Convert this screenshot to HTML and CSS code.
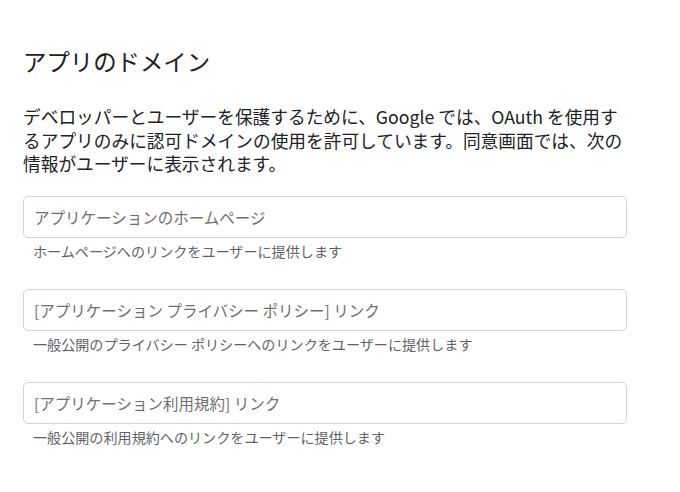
FILE: index.html
```html
<!DOCTYPE html>
<html lang="ja">

<head>
    <meta charset="UTF-8">
    <title>アプリのドメイン</title>
    <link rel="stylesheet" href="styles.css">
</head>

<body>
    <section class="domain">
        <h2 class="domain-title">アプリのドメイン</h2>

        <p class="domain-desc">デベロッパーとユーザーを保護するために、Google では、OAuth を使用す<br>るアプリのみに認可ドメインの使用を許可しています。同意画面では、次の<br>情報がユーザーに表示されます。</p>

        <!-- Links shown on the consent screen -->
        <div class="field">
            <input class="field-input" type="url" placeholder="アプリケーションのホームページ">
            <div class="field-hint">ホームページへのリンクをユーザーに提供します</div>
        </div>

        <div class="field">
            <input class="field-input" type="url" placeholder="[アプリケーション プライバシー ポリシー] リンク">
            <div class="field-hint">一般公開のプライバシー ポリシーへのリンクをユーザーに提供します</div>
        </div>

        <div class="field">
            <input class="field-input" type="url" placeholder="[アプリケーション利用規約] リンク">
            <div class="field-hint">一般公開の利用規約へのリンクをユーザーに提供します</div>
        </div>
    </section>
</body>

</html>
```

FILE: styles.css
```css
body {
    margin: 0;
    padding: 0;
    background-color: #ffffff;
    font-family: "Noto Sans CJK JP", "Noto Sans", sans-serif;
    color: #202124;
}

.domain {
    padding: 45px 0 0 23px;
    width: 604px;
}

.domain-title {
    margin: 0;
    font-size: 23.4px;
    font-weight: 400;
    line-height: 32px;
}

.domain-desc {
    margin: 28px 0 20px;
    font-size: 17.7px;
    line-height: 23.5px;
    white-space: nowrap;
}

.field {
    margin-bottom: 29px;
}

.field-input {
    display: block;
    width: 100%;
    height: 42px;
    box-sizing: border-box;
    padding: 0 10px;
    border: 1px solid #d4d4d4;
    border-radius: 5px;
    font-family: inherit;
    font-size: 15.5px;
    color: #202124;
}

.field-input::placeholder {
    color: #6f6f6f;
}

.field-hint {
    margin: 4px 0 0 10px;
    font-size: 14.1px;
    line-height: 18px;
    color: #5f6368;
}
```
